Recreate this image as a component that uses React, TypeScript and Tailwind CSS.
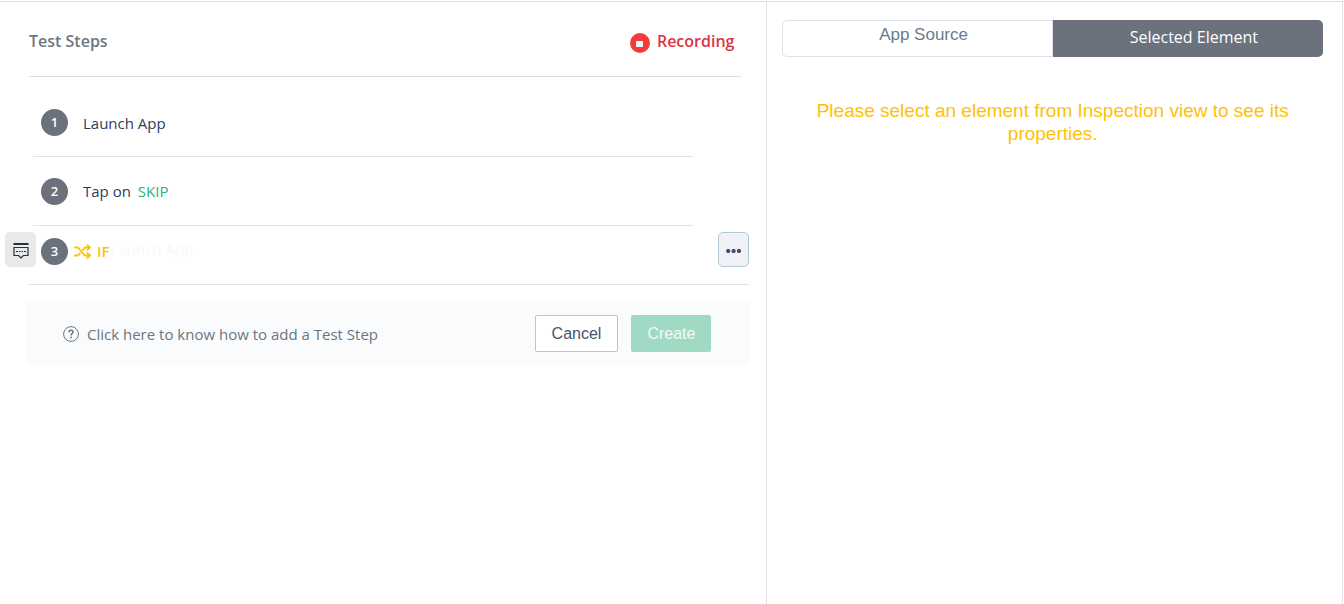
import React from "react";

function CommentIcon() {
  return (
    <svg viewBox="0 0 16 16" className="size-4" fill="none" stroke="#1c3349" aria-hidden="true">
      <path d="M0.5 1h15" strokeWidth="2" />
      <path d="M1 4.5h14v8H10.4L8 14.9 5.6 12.5H1z" strokeWidth="1.2" />
      <path d="M3 8.5h2M6 8.5h1.5M8.5 8.5H10M11 8.5h2" strokeWidth="1" />
    </svg>
  );
}

function ShuffleIcon() {
  return (
    <svg viewBox="0 0 17 15" className="mr-1.5 h-[15px] w-[17px]" fill="none" stroke="currentColor" strokeWidth="1.8" strokeLinejoin="round" strokeLinecap="round" aria-hidden="true">
      <path d="M0.9 3.5h3.2l6.6 8h5" />
      <path d="M0.9 11.5h3.2l1.8-2.1M8.6 6l2.1-2.5h5" />
      <path d="M13.4 1.1l2.6 2.4-2.6 2.4M13.4 9.1l2.6 2.4-2.6 2.4" />
    </svg>
  );
}

function StepNumber({ n }: { n: number }) {
  return (
    <span className="flex size-[27px] shrink-0 items-center justify-center rounded-full bg-[#6b717d] pt-px text-[13px] font-semibold text-white">
      {n}
    </span>
  );
}

export default function App() {
  return (
    <div className="bg-white pt-px">
      <div className="flex min-h-[calc(100vh-1px)] border-t border-[#dcdfe3] font-['Open_Sans',sans-serif] text-[15px] text-[#2b4158]">
        <main className="w-[57.1%] border-r border-[#dfe1e8] pr-[17px] pl-[5px]">
          <header className="mr-2 ml-6 flex h-[75px] items-center justify-between border-b border-[#dcdfe0] pt-[3px] pr-[7px]">
            <h1 className="text-[16px] font-semibold text-[#6f7681]">Test Steps</h1>
            <div className="flex items-center gap-[7px] text-[16px] font-semibold text-[#dc3545]">
              <svg viewBox="0 0 20 20" className="mt-1 size-5" aria-hidden="true">
                <circle cx="10" cy="10" r="10" fill="#f43b3b" />
                <path d="M6 8h7v6H6z" fill="#f3f3f3" />
              </svg>
              <span>Recording</span>
            </div>
          </header>

          <ol>
            <li className="mr-14 ml-7 flex h-20 items-center gap-[15px] border-b border-[#dee2ea] pt-3 pl-2">
              <StepNumber n={1} />
              <span className="pt-px">Launch App</span>
            </li>
            <li className="mr-14 ml-7 flex h-[69px] items-center gap-[15px] border-b border-[#dee2ea] pl-2">
              <StepNumber n={2} />
              <span className="pt-px">
                Tap on <span className="ml-[3px] text-[#24b47e]">SKIP</span>
              </span>
            </li>
            <li className="flex h-[58px] items-center pb-[11px]">
              <button type="button" aria-label="Comment" className="mr-[5px] flex h-[35px] w-[31px] items-center justify-center rounded-[5px] bg-[#e9e9e9] pt-[3px]">
                <CommentIcon />
              </button>
              <span className="flex items-center pt-[3px]">
                <StepNumber n={3} />
                <span className="ml-1.5 flex items-center font-semibold text-[#ffc107]">
                  <ShuffleIcon />
                  IF
                </span>
              </span>
              <span className="ml-px text-[#f8f8f9]">Launch App</span>
              <button type="button" aria-label="More options" className="ml-auto flex h-[35px] w-[31px] items-center justify-center rounded-[5px] border border-[#b0c9d9] bg-[#eff1f6] pt-[3px]">
                <svg viewBox="0 0 16 4" className="h-1 w-4" fill="#3c4d6b" aria-hidden="true">
                  <circle cx="2.2" cy="2" r="2.1" />
                  <circle cx="7.6" cy="2" r="2.1" />
                  <circle cx="13" cy="2" r="2.1" />
                </svg>
              </button>
            </li>
          </ol>

          <section className="ml-[21px]">
            <div className="ml-[3px] border-t border-[#dee2ea]" />
            <div className="mt-4 flex h-16 items-center bg-[#fafbfd] pr-[38px] pl-[37px]">
              <a href="#help" className="flex items-center gap-2 pt-0.5 text-[#6c757d]">
                <svg viewBox="0 0 16 16" className="size-4" fill="none" stroke="currentColor" aria-hidden="true">
                  <circle cx="8" cy="8" r="7.4" />
                  <path d="M5.9 6.3c0-1.3.9-2 2.1-2s2.1.7 2.1 1.8c0 1.6-2.1 1.6-2.1 3.3" strokeWidth="1.5" />
                  <circle cx="8" cy="11.4" r="0.9" fill="currentColor" stroke="none" />
                </svg>
                Click here to know how to add a Test Step
              </a>
              <div className="ml-auto flex gap-[13px] font-['Liberation_Sans',sans-serif] text-[16px]">
                <button type="button" className="h-[37px] rounded-[2px] border border-[#b0c9d9] bg-white px-4 pt-px text-[#44546f]">Cancel</button>
                <button type="button" className="h-[37px] rounded-[2px] bg-[#a0dac4] px-4 pt-px text-[#f0faf6]">Create</button>
              </div>
            </div>
          </section>
        </main>

        <aside className="mr-px flex-1 border-r border-[#dfe3ea] pt-[18px] pr-[19px] pl-[15px]">
          <div role="tablist" className="grid h-[37px] grid-cols-2">
            <button type="button" role="tab" aria-selected="false" className="rounded-l-[5px] border border-[#dee2e8] pb-2 pl-3 font-['Liberation_Sans',sans-serif] text-[17px] text-[#6c7a90]">
              App Source
            </button>
            <button type="button" role="tab" aria-selected="true" className="rounded-r-[5px] bg-[#6b717d] pb-[3px] pl-3 text-[16px] text-white">
              Selected Element
            </button>
          </div>
          <p className="mt-[42px] px-4 text-center font-['Liberation_Sans',sans-serif] text-[19px] leading-[23px] text-[#ffc107]">
            Please select an element from Inspection view to see its properties.
          </p>
        </aside>
      </div>
    </div>
  );
}
